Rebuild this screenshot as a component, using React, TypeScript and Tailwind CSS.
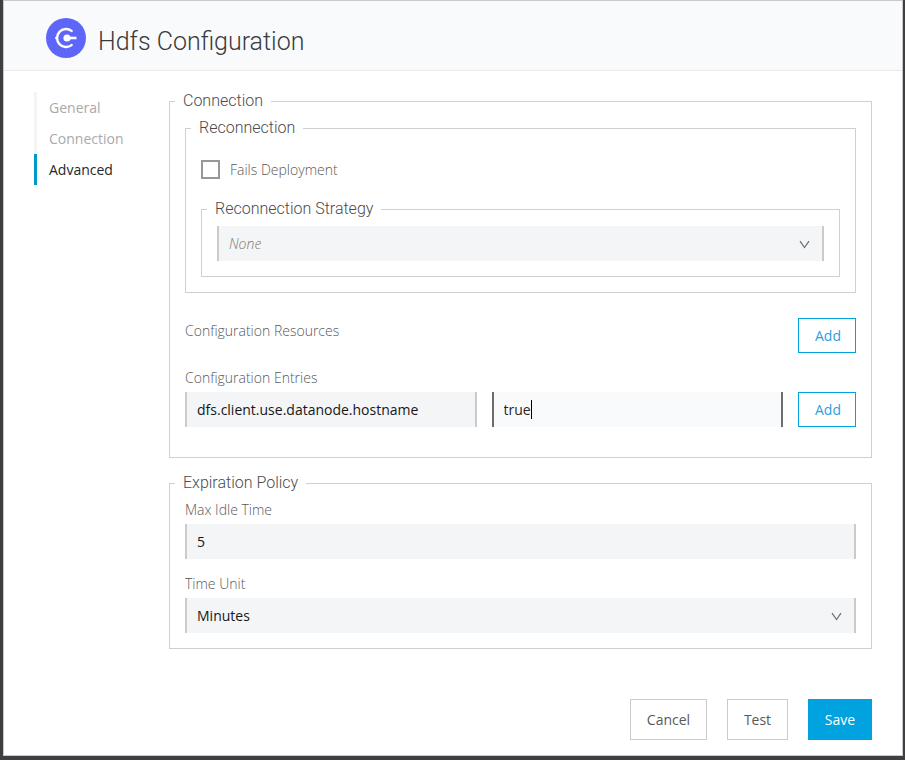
import { useState } from "react";
import type { ReactNode } from "react";

function Group({ title, className = "", children }: { title: string; className?: string; children: ReactNode }) {
  return (
    <fieldset className={`min-w-0 border border-[#d0d0d0] px-[15px] pb-[15px] ${className}`}>
      <legend className="-ml-[10px] mb-[6px] px-2 pb-[2px] font-['Roboto'] text-base leading-[19px] font-light text-[#4a4b4d]">
        {title}
      </legend>
      {children}
    </fieldset>
  );
}

function FieldLabel({ htmlFor, children }: { htmlFor: string; children: ReactNode }) {
  return (
    <label htmlFor={htmlFor} className="block h-5 text-sm leading-5 font-light text-[#58595a]">
      {children}
    </label>
  );
}

function Dropdown({ id, label, options, className }: { id: string; label?: string; options: string[]; className: string }) {
  return (
    <div className="relative">
      <select
        id={id}
        aria-label={label}
        className={`block h-[35px] w-full appearance-none rounded-none border-x-2 border-[#cacbcc] bg-[#f4f5f7] px-[10px] text-sm outline-none ${className}`}
      >
        {options.map((option) => (
          <option key={option}>{option}</option>
        ))}
      </select>
      <svg
        className="pointer-events-none absolute top-[14px] right-[14px] h-[9px] w-[11px]"
        viewBox="0 0 11 9"
        fill="none"
        stroke="#6b6c6e"
        strokeWidth="1.2"
      >
        <path d="M1 1.2 5.5 7.5 10 1.2" />
      </svg>
    </div>
  );
}

function AddButton({ label }: { label: string }) {
  return (
    <button
      type="button"
      aria-label={label}
      className="h-[35px] w-[58px] shrink-0 border border-[#00a2df] bg-white pt-px pl-[2px] text-sm text-[#2b9fe0]"
    >
      Add
    </button>
  );
}

const tabs = ["General", "Connection", "Advanced"];

export default function App() {
  const [active, setActive] = useState("Advanced");
  const [value, setValue] = useState("true");

  return (
    <div className="flex min-h-screen bg-[#3f3e40] pr-[2px] pb-1 pl-[3px] font-['Open_Sans','Noto_Sans',sans-serif]">
      <div className="flex-1 border border-[#c8c9ca] bg-white">
        <header className="flex h-[70px] items-start border-b border-[#e8e9ea] bg-[#f9fafb] pt-[17px] pl-[42px]">
          <svg className="h-10 w-10 shrink-0" viewBox="0 0 40 40" fill="none">
            <circle cx="20" cy="20" r="20" fill="#5e66f9" />
            <path d="M25.6 12.9A9 9 0 1 0 25.6 27.1" stroke="#fff" strokeWidth="2.4" strokeLinecap="round" />
            <path d="M9.2 20H12" stroke="#fff" strokeWidth="2.4" />
            <circle cx="21" cy="20" r="3.6" fill="#fff" />
            <path d="M21 20H30.5" stroke="#fff" strokeWidth="2.6" />
          </svg>
          <h1 className="pt-2 pl-3 font-['Roboto'] text-[25px] leading-8 font-light text-[#3a3b3c]">
            Hdfs Configuration
          </h1>
        </header>

        <div className="flex pt-5 pr-[30px] pl-[30px]">
          <nav className="mt-px w-[135px] shrink-0">
            {tabs.map((tab) => (
              <button
                key={tab}
                type="button"
                onClick={() => setActive(tab)}
                className={`block h-[31px] w-full border-l-[3px] pl-3 text-left text-sm ${
                  tab === active ? "border-[#0099cc] text-[#262728]" : "border-[#f4f4f4] text-[#a9aaab]"
                }`}
              >
                {tab}
              </button>
            ))}
          </nav>

          <form className="min-w-0 flex-1 pb-[15px]" onSubmit={(event) => event.preventDefault()}>
            <Group title="Connection">
              <Group title="Reconnection">
                <label className="flex h-[54px] items-start pt-[15px] text-sm leading-5 font-light text-[#58595a]">
                  <input
                    type="checkbox"
                    className="mr-[10px] h-[19px] w-[19px] appearance-none border-2 border-[#979797] bg-white checked:bg-[#00a2df]"
                  />
                  Fails Deployment
                </label>
                <Group title="Reconnection Strategy">
                  <Dropdown
                    id="strategy"
                    label="Reconnection Strategy"
                    options={["None", "Reconnect", "Reconnect forever"]}
                    className="font-light text-[#77797b] italic"
                  />
                </Group>
              </Group>

              <div className="mt-[25px] flex items-start justify-between">
                <span className="pt-[3px] text-sm leading-5 font-light text-[#58595a]">Configuration Resources</span>
                <AddButton label="Add configuration resource" />
              </div>

              <div className="mt-[15px] mb-[15px]">
                <FieldLabel htmlFor="entry-key">Configuration Entries</FieldLabel>
                <div className="mt-1 flex gap-[15px]">
                  <div className="min-w-0 flex-1">
                    <input
                      id="entry-key"
                      defaultValue="dfs.client.use.datanode.hostname"
                      className="block h-[35px] w-full border-x-2 border-[#cacbcc] bg-[#f4f5f7] px-[10px] text-sm text-[#161718] outline-none"
                    />
                  </div>
                  <div className="relative min-w-0 flex-1">
                    <input
                      aria-label="Entry value"
                      value={value}
                      onChange={(event) => setValue(event.target.value)}
                      className="peer block h-[35px] w-full border-x-2 border-[#6b6c6d] bg-[#f9fafb] px-[10px] text-sm text-[#262728] outline-none"
                    />
                    <span className="pointer-events-none absolute top-2 left-[39px] h-[19px] w-px bg-black peer-focus:hidden" />
                  </div>
                  <AddButton label="Add configuration entry" />
                </div>
              </div>
            </Group>

            <Group title="Expiration Policy" className="mt-[15px]">
              <FieldLabel htmlFor="idle">Max Idle Time</FieldLabel>
              <input
                id="idle"
                defaultValue="5"
                className="mt-1 mb-[15px] block h-[35px] w-full border-x-2 border-[#cacbcc] bg-[#f4f5f7] px-[10px] text-sm text-[#161718] outline-none"
              />
              <FieldLabel htmlFor="unit">Time Unit</FieldLabel>
              <div className="mt-1">
                <Dropdown id="unit" options={["Minutes", "Seconds", "Hours", "Days"]} className="text-[#161718]" />
              </div>
            </Group>

            <div className="mt-[50px] flex justify-end gap-5">
              <button type="button" className="h-[41px] w-[77px] border border-[#cacbcc] bg-white text-sm text-[#58595a]">
                Cancel
              </button>
              <button type="button" className="h-[41px] w-[61px] border border-[#cacbcc] bg-white text-sm text-[#58595a]">
                Test
              </button>
              <button type="submit" className="h-[41px] w-16 border border-[#00a2df] bg-[#00a2df] text-sm font-medium text-white">
                Save
              </button>
            </div>
          </form>
        </div>
      </div>
    </div>
  );
}
